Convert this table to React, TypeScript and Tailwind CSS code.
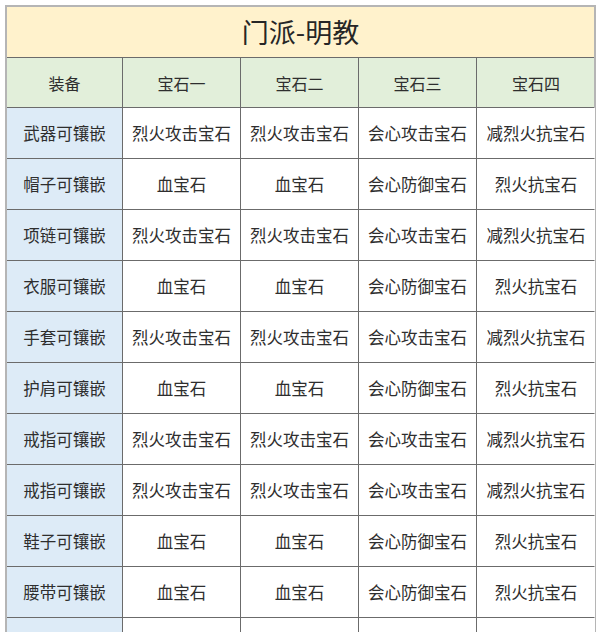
const headers = ["装备", "宝石一", "宝石二", "宝石三", "宝石四"];

const rows: string[][] = [
  ["武器可镶嵌", "烈火攻击宝石", "烈火攻击宝石", "会心攻击宝石", "减烈火抗宝石"],
  ["帽子可镶嵌", "血宝石", "血宝石", "会心防御宝石", "烈火抗宝石"],
  ["项链可镶嵌", "烈火攻击宝石", "烈火攻击宝石", "会心攻击宝石", "减烈火抗宝石"],
  ["衣服可镶嵌", "血宝石", "血宝石", "会心防御宝石", "烈火抗宝石"],
  ["手套可镶嵌", "烈火攻击宝石", "烈火攻击宝石", "会心攻击宝石", "减烈火抗宝石"],
  ["护肩可镶嵌", "血宝石", "血宝石", "会心防御宝石", "烈火抗宝石"],
  ["戒指可镶嵌", "烈火攻击宝石", "烈火攻击宝石", "会心攻击宝石", "减烈火抗宝石"],
  ["戒指可镶嵌", "烈火攻击宝石", "烈火攻击宝石", "会心攻击宝石", "减烈火抗宝石"],
  ["鞋子可镶嵌", "血宝石", "血宝石", "会心防御宝石", "烈火抗宝石"],
  ["腰带可镶嵌", "血宝石", "血宝石", "会心防御宝石", "烈火抗宝石"],
  ["", "", "", "", ""],
];

const cols = "grid grid-cols-[116px_118px_118px_118px_118px]";

export default function App() {
  return (
    <div className="w-[600px] h-[632px] overflow-hidden bg-white pt-[5px] pl-[5px] font-['Noto_Sans_CJK_SC',sans-serif] text-[#2e2e2e]">
      <div className="w-[591px] border-l-2 border-t-2 border-r-2 border-[#b5b5b5]">
        <div className="h-[51px] bg-[#fff2cc] border-b border-[#6b6b6b] flex items-center justify-center text-[27px] text-[#262626]">
          门派-明教
        </div>
        <div className={cols + " h-[50px] bg-[#e2efda] border-b border-[#6b6b6b]"}>
          {headers.map((h, i) => (
            <div
              key={i}
              className={"flex items-center justify-center text-[16px] " + (i < 4 ? "border-r border-[#6b6b6b]" : "")}
            >
              {h}
            </div>
          ))}
        </div>
        {rows.map((r, ri) => (
          <div key={ri} className={cols + " h-[51px] border-b border-[#6b6b6b]"}>
            {r.map((c, ci) => (
              <div
                key={ci}
                className={
                  "flex items-center justify-center text-[16.5px] " +
                  (ci === 0 ? "bg-[#ddebf7] " : "bg-white ") +
                  (ci < 4 ? "border-r border-[#6b6b6b]" : "")
                }
              >
                {c}
              </div>
            ))}
          </div>
        ))}
      </div>
    </div>
  );
}
